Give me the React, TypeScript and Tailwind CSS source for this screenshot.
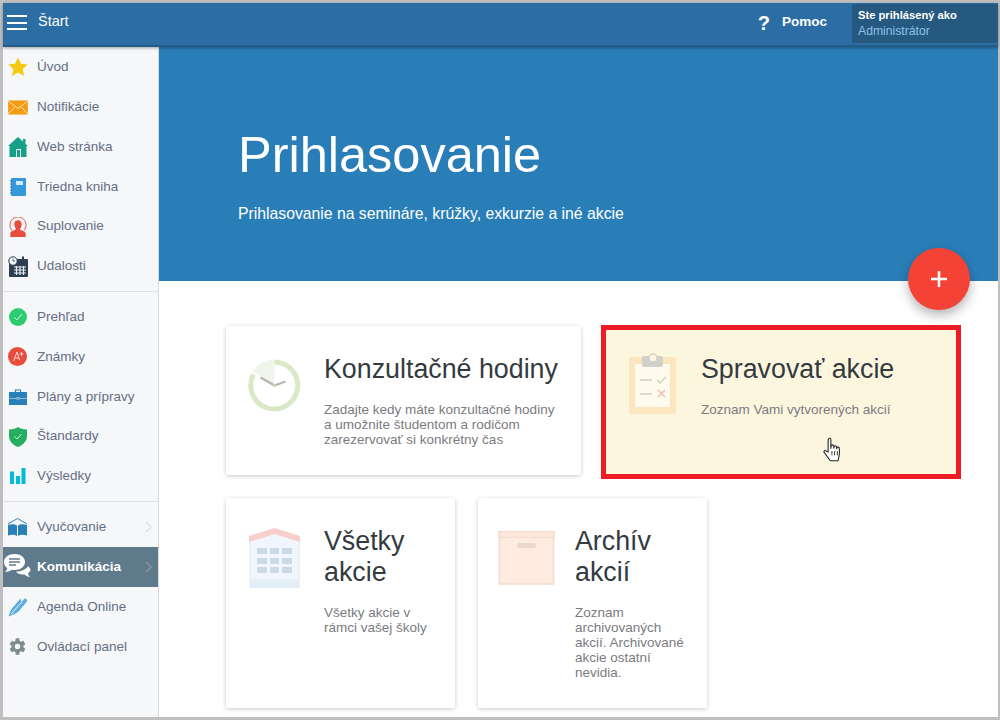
import React from "react";

const Star = () => (
  <svg width="20" height="20" viewBox="0 0 22 22"><path d="M11 0.500l3.200 7 7.500.8-5.600 5 1.600 7.600L11 17l-6.700 3.900 1.600-7.600-5.600-5 7.500-.8z" fill="#f5c90f" /></svg>
);
const Mail = () => (
  <svg width="20" height="15" viewBox="0 0 21 16"><rect width="21" height="15" y="0.500" fill="#f39c12" /><path d="M0 1l10.500 8L21 1M0 15l7.500-8M21 15l-7.500-8" stroke="#fde3b5" strokeWidth="1" fill="none" /></svg>
);
const House = () => (
  <svg width="20" height="20" viewBox="0 0 20 20"><path d="M0 9L10 0l5 4.500V2h2.500v5L20 9h-1.500v11h-17V9z" fill="#16a085" /><rect x="8" y="12" width="5" height="8" fill="#e8f6f2" /><rect x="9" y="13" width="3" height="7" fill="#16a085" /></svg>
);
const Notebook = () => (
  <svg width="16" height="18" viewBox="0 0 16 18"><rect x="1" width="15" height="18" rx="1" fill="#3498db" /><rect x="6" y="3" width="7" height="4" fill="#d6eaf8" /><path d="M0 3h2M0 6h2M0 9h2M0 12h2M0 15h2" stroke="#2171a8" strokeWidth="1" /></svg>
);
const Person = () => (
  <svg width="18" height="20" viewBox="0 0 20 22"><path d="M3.500 15A9 9 0 1 1 16.500 15" fill="none" stroke="#e74c3c" strokeWidth="1" /><path d="M10 3.500c3 0 4.500 2.500 4 5.500-.2 1.800-1 3-1.500 3.800-.3 1 0 1.600 1.500 2.200 2 .8 4 1.500 4.500 3V22H1.500v-4.500c.5-1.500 2.500-2.200 4.500-3 1.500-.6 1.800-1.200 1.500-2.200C7 12 6.200 10.800 6 9c-.5-3 1-5.500 4-5.500z" fill="#e74c3c" /></svg>
);
const Calendar = () => (
  <svg width="20" height="21" viewBox="0 0 20 21"><rect x="1" y="3" width="19" height="18" rx="1" fill="#2c3e50" /><rect x="14" y="0.500" width="2" height="3" fill="#2c3e50" /><circle cx="5" cy="5" r="4.200" fill="#f5f7f9" stroke="#2c3e50" strokeWidth="1" /><path d="M5 2.500v2.500h2" stroke="#2c3e50" strokeWidth="0.800" fill="none" /><path d="M6 11h12M6 14h12M6 17h12M8.500 10v9M12 10v9M15.500 10v9" stroke="#e8edf0" strokeWidth="1.200" /></svg>
);
const CheckCircle = () => (
  <svg width="18" height="18" viewBox="0 0 18 18"><circle cx="9" cy="9" r="9" fill="#2ecc71" /><path d="M5.500 9.500l2.500 2.500 5-6" stroke="#d5f5e3" strokeWidth="1" fill="none" /></svg>
);
const Grade = () => (
  <svg width="19" height="19" viewBox="0 0 19 19"><circle cx="9.500" cy="9.500" r="9.500" fill="#e74c3c" /><path d="M5.500 14L9 5l2.500 8M6.800 11h4" stroke="#f9d5d0" strokeWidth="1" fill="none" /><path d="M13.500 5v4M11.500 7h4" stroke="#f9d5d0" strokeWidth="1" /></svg>
);
const Case = () => (
  <svg width="18" height="16" viewBox="0 0 18 16"><path d="M6.500 3V1h5v2" fill="none" stroke="#2980b9" strokeWidth="1.200" /><rect y="3" width="18" height="13" fill="#2980b9" /><path d="M0 9.500h18" stroke="#a9cce3" strokeWidth="0.800" /><rect x="8" y="8.500" width="2" height="2" fill="#2980b9" stroke="#d4e6f1" strokeWidth="0.500" /></svg>
);
const Shield = () => (
  <svg width="18" height="20" viewBox="0 0 18 20"><path d="M9 0c2 1.500 5 2.500 9 2.500V9c0 5.500-4 9-9 11-5-2-9-5.500-9-11V2.500C4 2.500 7 1.500 9 0z" fill="#27ae60" /><path d="M5.500 9.500l2.500 2.500 4.500-5" stroke="#d5f5e3" strokeWidth="1" fill="none" /></svg>
);
const Bars = () => (
  <svg width="16" height="16" viewBox="0 0 16 16"><rect y="3.500" width="4" height="12.500" fill="#00bcd4" /><rect x="6" y="8" width="4" height="8" fill="#00bcd4" /><rect x="11.500" width="4" height="16" fill="#00bcd4" /></svg>
);
const Book = () => (
  <svg width="21" height="19" viewBox="0 0 21 19"><path d="M1 6l9.500-5.500L20 6" fill="none" stroke="#2980b9" strokeWidth="1" /><path d="M1 7c3-1 7-1 9 .5V18c-2-1.500-6-1.500-9-.5zM20 7c-3-1-7-1-9 .5V18c2-1.500 6-1.500 9-.5z" fill="#2980b9" /></svg>
);
const Chat = () => (
  <svg width="29" height="29" viewBox="0 0 29 29"><path d="M11.500 1C5.500 1 1 4.500 1 9c0 2.700 1.300 4.700 3.300 6.100C4 16.600 3.200 18 2 19c2.700 0 5-1 6.600-2.300.9.200 1.900.3 2.900.3C17.500 17 22 13.500 22 9s-4.500-8-10.500-8z" fill="#fff" /><path d="M6 6h11M6 9h11M6 12h7" stroke="#5f7a8a" strokeWidth="1.500" /><path d="M23.500 13c2.400.6 4 2 4 3.800 0 1.500-1 2.700-2.500 3.500.2 1.400.8 2.600 2 3.700-2.300-.3-4-1.200-5.200-2.600-.7.100-1.300.2-2 .2-3 0-5.700-1.200-6.800-3 5-.2 10-2 12.500-5.600z" fill="#fff" /></svg>
);
const Pen = () => (
  <svg width="20" height="20" viewBox="0 0 20 20"><path d="M0.500 19.500C1.500 17 2 14 3.500 12L12.500 1.500 13.500 5 16.500 1.500C18 1.200 19.500 2.500 19 4.500L11 14C9 16 6 17.500 0.500 19.500z" fill="#5dade2" /><path d="M3 17L14 5" stroke="#f5f7f9" strokeWidth="1" /></svg>
);
const Gear = () => (
  <svg width="19" height="19" viewBox="0 0 24 24"><path fill="#7f8c8d" d="M19.400 13a7.600 7.600 0 0 0 0-2l2.500-2-2.500-4.300-3 1.200a7.500 7.500 0 0 0-1.700-1L14.200 1.700H9.800l-.5 3.200a7.500 7.500 0 0 0-1.700 1l-3-1.200L2.100 9l2.500 2a7.600 7.600 0 0 0 0 2l-2.500 2 2.500 4.300 3-1.200c.5.400 1.100.7 1.700 1l.5 3.200h4.400l.5-3.200c.6-.3 1.200-.6 1.700-1l3 1.200 2.500-4.300zM12 15.500a3.500 3.500 0 1 1 0-7 3.500 3.500 0 0 1 0 7z" /></svg>
);

const Chevron = ({ active }: { active?: boolean }) => (
  <svg width="7" height="12" viewBox="0 0 7 12" className="absolute right-[6px] top-1/2 -translate-y-1/2"><path d="M1 1l5 5-5 5" fill="none" stroke={active ? "#8399a6" : "#dfe3e6"} strokeWidth="1.500" /></svg>
);

type Row = { label: string; icon: React.ReactNode; chevron?: boolean; active?: boolean };

const group1: Row[] = [
  { label: "Úvod", icon: <Star /> },
  { label: "Notifikácie", icon: <Mail /> },
  { label: "Web stránka", icon: <House /> },
  { label: "Triedna kniha", icon: <Notebook /> },
  { label: "Suplovanie", icon: <Person /> },
  { label: "Udalosti", icon: <Calendar /> },
];
const group2: Row[] = [
  { label: "Prehľad", icon: <CheckCircle /> },
  { label: "Známky", icon: <Grade /> },
  { label: "Plány a prípravy", icon: <Case /> },
  { label: "Štandardy", icon: <Shield /> },
  { label: "Výsledky", icon: <Bars /> },
];
const group3: Row[] = [
  { label: "Vyučovanie", icon: <Book />, chevron: true },
  { label: "Komunikácia", icon: <Chat />, chevron: true, active: true },
  { label: "Agenda Online", icon: <Pen /> },
  { label: "Ovládací panel", icon: <Gear /> },
];

function NavRow({ r }: { r: Row }) {
  return (
    <div className={`relative flex items-center pt-[1px] ${r.active ? "h-[40px] bg-[#5f7a8a]" : "h-[39.800px]"}`}>
      <div className="mr-[5px] flex w-[29px] shrink-0 items-center justify-center">{r.icon}</div>
      <span className={`text-[13.500px] ${r.active ? "font-bold text-white" : "text-[#666e85]"}`}>{r.label}</span>
      {r.chevron && <Chevron active={r.active} />}
    </div>
  );
}

function Card({ title, text, icon, className, iconClass }: { title: React.ReactNode; text: React.ReactNode; icon: React.ReactNode; className: string; iconClass: string }) {
  return (
    <div className={`flex rounded-[2px] bg-white shadow-[0_1px_4px_rgba(0,0,0,0.22)] ${className}`}>
      <div className={`shrink-0 ${iconClass}`}>{icon}</div>
      <div className="min-w-0 pr-[15px] pt-[28px]">
        <h3 className="text-[26.800px] leading-[31px] text-[#333a40]">{title}</h3>
        <p className="mt-[17px] text-[13.500px] leading-[15px] text-[#7b7b7f]">{text}</p>
      </div>
    </div>
  );
}

const Clock = () => (
  <svg width="53" height="53" viewBox="1.500 1.500 53 53">
    <path d="M28 2a26 26 0 0 0-22 12L28 28z" fill="#f1f6ec" />
    <path d="M28 4.500A23.500 23.500 0 1 1 7 17" fill="none" stroke="#d9e9c8" strokeWidth="5" />
    <path d="M14 20l14 8 11-4" fill="none" stroke="#b5b5b5" strokeWidth="2.200" />
    <circle cx="28" cy="28" r="1.800" fill="#c8d8a8" />
  </svg>
);
const Clipboard = () => (
  <svg width="47" height="61" viewBox="0 0 47 61">
    <rect y="4" width="47" height="57" rx="2" fill="#fbe6bf" />
    <rect x="6" y="11" width="35" height="43" fill="#fefaee" />
    <rect x="13" y="3" width="21" height="11" rx="2" fill="#d1d1c9" />
    <circle cx="24" cy="5" r="4" fill="#fef6df" stroke="#d1d1c9" strokeWidth="1.500" />
    <path d="M11 27h12M11 41h12" stroke="#d1d1c9" strokeWidth="1.500" />
    <path d="M28 27l3 3 6-6" stroke="#c9d8b6" strokeWidth="1.500" fill="none" />
    <path d="M29 37l7 7m0-7l-7 7" stroke="#efbfb0" strokeWidth="1.500" />
  </svg>
);
const Building = () => (
  <svg width="51" height="60" viewBox="0 0 51 60">
    <path d="M1 10L25.500 1 50 10v49.500H1z" fill="#f0f6fc" stroke="#dfeaf5" strokeWidth="1" />
    <path d="M0 8L25.500 0 51 8v6L25.500 6 0 14z" fill="#f7cfcb" />
    <rect x="1" y="51" width="49" height="8" fill="#e4eef7" />
    <g fill="#cbd8e8">
      <rect x="8" y="20" width="10" height="6" /><rect x="21" y="20" width="9" height="6" /><rect x="33" y="20" width="10" height="6" />
      <rect x="8" y="30" width="10" height="6" /><rect x="21" y="30" width="9" height="6" /><rect x="33" y="30" width="10" height="6" />
      <rect x="8" y="39" width="10" height="6" /><rect x="21" y="39" width="9" height="6" /><rect x="33" y="39" width="10" height="6" />
    </g>
  </svg>
);
const BoxIcon = () => (
  <svg width="57" height="54" viewBox="0 0 57 54">
    <rect x="1.500" y="6" width="54" height="47" fill="#ffece0" stroke="#f3dccd" strokeWidth="1.500" />
    <rect x="0.500" y="0.500" width="56" height="6" fill="#fbe6d8" stroke="#f3dccd" strokeWidth="1" />
    <rect x="19" y="12" width="19" height="5" rx="2.500" fill="#e9d8cd" />
  </svg>
);
const Hand = () => (
  <svg width="20" height="27" viewBox="0 0 18 25" className="absolute left-[217px] top-[107px]">
    <path d="M5 1.500c.8-.8 2-.3 2 1v8l.3-2.500c.6-1 2-1 2.300.3l.2 2 .2-1.500c.6-1 2-.8 2.300.4l.2 1.600.2-1c.6-.8 2-.5 2.100.6.3 2.500.2 5.500-.3 8.100l-.9 3.500H6.500L1 14.500c-.9-1 0-2.400 1.300-1.800L4.500 14V2.500z" fill="#fff" stroke="#222" strokeWidth="1" strokeLinejoin="round" />
    <path d="M8 13v4M10.500 13v4M13 13v4" stroke="#222" strokeWidth="0.800" />
  </svg>
);

export default function App() {
  return (
    <div className="flex h-[720px] w-[1000px] flex-col overflow-hidden bg-[#bfbfbf] pb-[3px] pl-[3px] pr-[2px] pt-[3px] font-['Liberation_Sans',Arial,sans-serif]">
      <header className="relative z-10 flex h-[44px] shrink-0 items-start border-b-2 border-[#235a88] bg-[#2c6ea4] shadow-[0_1px_3px_rgba(0,0,0,0.35)]">
        <div className="ml-[4px] mt-[12px] flex w-[20px] flex-col gap-[4.500px]">
          <span className="h-[2px] bg-white" />
          <span className="h-[2px] bg-white" />
          <span className="h-[2px] bg-white" />
        </div>
        <span className="ml-[11px] mt-[10px] text-[14.500px] leading-[17px] text-white">Štart</span>
        <div className="ml-auto flex items-start">
          <span className="mr-[12px] mt-[9px] text-[20px] font-bold leading-[22px] text-white">?</span>
          <span className="mr-[25px] mt-[10px] text-[13.500px] font-bold leading-[17px] text-white">Pomoc</span>
          <div className="mt-[1px] h-[39px] w-[146px] rounded-tl-[3px] bg-[#25597f] pl-[6px] pt-[4px] leading-[14px]">
            <div className="text-[11.200px] font-bold text-white">Ste prihlásený ako</div>
            <div className="mt-[2px] text-[12.200px] text-[#8fc0ea]">Administrátor</div>
          </div>
        </div>
      </header>
      <div className="flex min-h-0 flex-1">
        <aside className="w-[156px] shrink-0 border-r border-[#d8dadd] bg-[#f5f7f9]">
          {group1.map((r) => <NavRow key={r.label} r={r} />)}
          <div className="mb-[5px] mt-[5px] h-px bg-[#dfe1e4]" />
          {group2.map((r) => <NavRow key={r.label} r={r} />)}
          <div className="mb-[5px] mt-[5px] h-px bg-[#dfe1e4]" />
          {group3.map((r) => <NavRow key={r.label} r={r} />)}
        </aside>
        <main className="relative min-w-0 flex-1 bg-white">
          <section className="h-[234px] bg-[#2a7eb8] pl-[79px] pt-[78px] text-white">
            <h1 className="text-[50.500px] leading-[60px]">Prihlasovanie</h1>
            <p className="mt-[20px] text-[15.750px] leading-[18px]">Prihlasovanie na semináre, krúžky, exkurzie a iné akcie</p>
          </section>
          <div className="absolute left-[749px] top-[201px] flex h-[62px] w-[62px] items-center justify-center rounded-full bg-[#f44336] shadow-[0_5px_12px_rgba(0,0,0,0.3)]">
            <svg width="16" height="16" viewBox="0 0 16 16"><path d="M8 0v16M0 8h16" stroke="#fff" strokeWidth="2.500" /></svg>
          </div>
          <div className="pl-[67px] pt-[44px]">
            <div className="flex items-start gap-[20px]">
              <Card className="mt-[1px] h-[149px] w-[355px]" iconClass="w-[98px] pl-[22px] pt-[33px]" icon={<Clock />} title="Konzultačné hodiny" text={<>Zadajte kedy máte konzultačné hodiny<br />a umožnite študentom a rodičom<br />zarezervovať si konkrétny čas</>} />
              <div className="relative flex h-[154px] w-[360px] border-[5px] border-[#ed1c24] bg-[#fdf6df]">
                <div className="w-[95px] shrink-0 pl-[23px] pt-[23px]"><Clipboard /></div>
                <div className="pt-[24px]">
                  <h3 className="text-[26.800px] leading-[31px] text-[#333a40]">Spravovať akcie</h3>
                  <p className="mt-[17px] text-[13.500px] leading-[15px] text-[#7b7b7f]">Zoznam Vami vytvorených akcií</p>
                </div>
                <Hand />
              </div>
            </div>
            <div className="mt-[19px] flex gap-[23px]">
              <Card className="h-[210px] w-[229px]" iconClass="w-[98px] pl-[23px] pt-[30px]" icon={<Building />} title={<>Všetky<br />akcie</>} text={<>Všetky akcie v<br />rámci vašej školy</>} />
              <Card className="h-[210px] w-[229px]" iconClass="w-[97px] pl-[20px] pt-[33px]" icon={<BoxIcon />} title={<>Archív<br />akcií</>} text={<>Zoznam<br />archivovaných<br />akcií. Archivované<br />akcie ostatní<br />nevidia.</>} />
            </div>
          </div>
        </main>
      </div>
    </div>
  );
}
